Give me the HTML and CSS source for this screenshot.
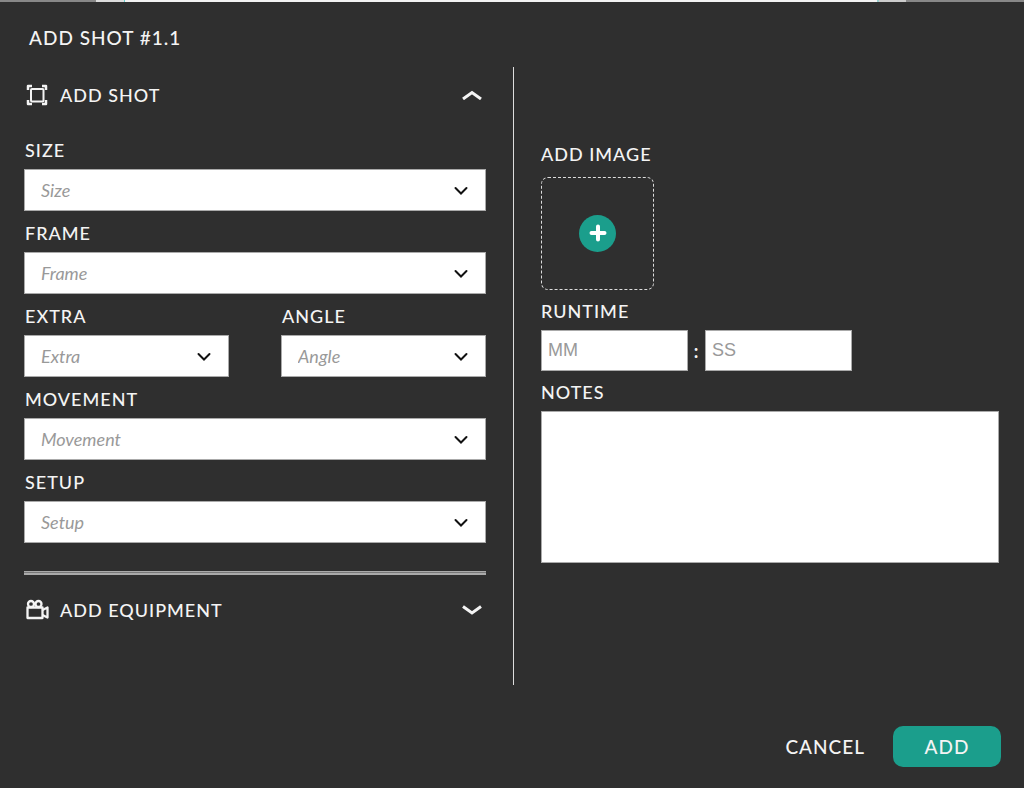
FILE: index.html
```html
<!DOCTYPE html>
<html lang="en">
<head>
<meta charset="utf-8">
<meta name="viewport" content="width=device-width, initial-scale=1">
<title>Add shot</title>
<link rel="stylesheet" href="styles.css">
</head>
<body>
<div class="backdrop"></div>
<main class="modal">
  <h1 class="title">ADD SHOT #1.1</h1>
  <form class="form">
    <div class="columns">
      <section class="left">
        <button type="button" class="section-toggle" aria-expanded="true">
          <svg class="section-icon" viewBox="0 0 24 24" fill="none" stroke="currentColor" stroke-width="2" aria-hidden="true"><path d="M3 7V3H7M17 3H21V7M21 17V21H17M7 21H3V17" stroke-width="2.500" stroke-linejoin="round"/><rect x="6" y="6" width="12.500" height="12.500" rx="1"/></svg>
          <span>ADD SHOT</span>
          <svg class="caret" viewBox="0 0 20 10" aria-hidden="true"><path d="M1 9L10 2.500L19 9"/></svg>
        </button>
        <div class="fields">
          <div class="field">
            <label for="size">SIZE</label>
            <div class="picker"><select id="size"><option>Size</option></select><svg viewBox="0 0 14 10" aria-hidden="true"><path d="M1.500 3L7 8.500L12.500 3"/></svg></div>
          </div>
          <div class="field">
            <label for="frame">FRAME</label>
            <div class="picker"><select id="frame"><option>Frame</option></select><svg viewBox="0 0 14 10" aria-hidden="true"><path d="M1.500 3L7 8.500L12.500 3"/></svg></div>
          </div>
          <div class="pair">
            <div class="field">
              <label for="extra">EXTRA</label>
              <div class="picker"><select id="extra"><option>Extra</option></select><svg viewBox="0 0 14 10" aria-hidden="true"><path d="M1.500 3L7 8.500L12.500 3"/></svg></div>
            </div>
            <div class="field">
              <label for="angle">ANGLE</label>
              <div class="picker"><select id="angle"><option>Angle</option></select><svg viewBox="0 0 14 10" aria-hidden="true"><path d="M1.500 3L7 8.500L12.500 3"/></svg></div>
            </div>
          </div>
          <div class="field">
            <label for="movement">MOVEMENT</label>
            <div class="picker"><select id="movement"><option>Movement</option></select><svg viewBox="0 0 14 10" aria-hidden="true"><path d="M1.500 3L7 8.500L12.500 3"/></svg></div>
          </div>
          <div class="field">
            <label for="setup">SETUP</label>
            <div class="picker"><select id="setup"><option>Setup</option></select><svg viewBox="0 0 14 10" aria-hidden="true"><path d="M1.500 3L7 8.500L12.500 3"/></svg></div>
          </div>
        </div>
        <hr class="rule">
        <button type="button" class="section-toggle" aria-expanded="false">
          <svg class="section-icon" viewBox="0 0 24 24" fill="none" stroke="currentColor" stroke-width="2.300" stroke-linejoin="round" aria-hidden="true"><rect x="2.500" y="9.500" width="15" height="10.500"/><circle cx="6" cy="6" r="3"/><circle cx="13.500" cy="6" r="3"/><path d="M17.500 12L22.500 9.500V19.500L17.500 17"/></svg>
          <span>ADD EQUIPMENT</span>
          <svg class="caret" viewBox="0 0 20 10" aria-hidden="true"><path d="M1 1.500L10 8L19 1.500"/></svg>
        </button>
      </section>
      <div class="divider"></div>
      <section class="right">
        <div class="field">
          <span class="label" id="image-label">ADD IMAGE</span>
          <button type="button" class="upload" aria-labelledby="image-label">
            <svg viewBox="0 0 37 37" aria-hidden="true"><circle cx="18.500" cy="18.500" r="18.500" fill="#1b9e8c"/><path d="M19 11.500V24.500M12.500 18H25.500" stroke="#fff" stroke-width="4" stroke-linecap="round"/></svg>
          </button>
        </div>
        <div class="field">
          <label for="minutes">RUNTIME</label>
          <div class="runtime">
            <input id="minutes" type="text" placeholder="MM">
            <span class="colon">:</span>
            <input id="seconds" type="text" placeholder="SS" aria-label="Runtime seconds">
          </div>
        </div>
        <div class="field">
          <label for="notes">NOTES</label>
          <textarea id="notes"></textarea>
        </div>
      </section>
    </div>
    <div class="actions">
      <button type="button" class="cancel">CANCEL</button>
      <button type="submit" class="add">ADD</button>
    </div>
  </form>
</main>
</body>
</html>
```
FILE: styles.css
```css
* { box-sizing: border-box; }

body {
  margin: 0;
  min-height: 100vh;
  background: #2f2f2f;
  color: #f4f4f4;
  font: 500 18px/22px Lato, sans-serif;
  letter-spacing: 1px;
}

button {
  margin: 0;
  padding: 0;
  border: 0;
  background: none;
  color: inherit;
  font: inherit;
  letter-spacing: inherit;
  cursor: pointer;
}

svg { display: block; }

.backdrop {
  height: 2px;
  background: linear-gradient(90deg, #888 0 96px, #ddd 96px 124px, #6cc 124px 125px, #f2f2f2 125px calc(100% - 147px), #9cc calc(100% - 147px) calc(100% - 145px), #ccc calc(100% - 145px) calc(100% - 118px), #888 calc(100% - 118px));
}

.modal { padding: 24px 25px 20px 24px; }

.title {
  margin: 0 0 17px 5px;
  font-size: 19px;
  font-weight: 500;
  line-height: 24px;
}

.columns {
  display: grid;
  grid-template-columns: 462fr 1px 458fr;
  column-gap: 27px;
  min-height: 618px;
}

.divider { background: #ddd; }

.left { padding-top: 15px; }

.left label { padding-left: 1px; }

.section-toggle {
  display: flex;
  align-items: center;
  gap: 11px;
  width: 100%;
  padding: 0 4px 0 1px;
  text-align: left;
}

.section-toggle span { flex: 1; line-height: 26px; }

.section-icon { width: 24px; height: 24px; }

.caret {
  width: 20px;
  height: 10px;
  fill: none;
  stroke: #f4f4f4;
  stroke-width: 3;
}

.fields {
  display: grid;
  gap: 11px;
  margin-top: 31px;
}

.field { display: grid; gap: 8px; }

.pair {
  display: grid;
  grid-template-columns: 1fr 1fr;
  gap: 52px;
}

.picker { display: grid; align-items: center; }

.picker select,
.picker svg { grid-area: 1 / 1; }

.picker svg {
  justify-self: end;
  width: 14px;
  height: 10px;
  margin-right: 18px;
  fill: none;
  stroke: #111;
  stroke-width: 2;
  stroke-linecap: round;
  pointer-events: none;
}

select,
input,
textarea {
  width: 100%;
  min-width: 0;
  margin: 0;
  border: 1px solid #aaa;
  border-radius: 0;
  background: #fff;
}

select {
  height: 42px;
  padding: 0 40px 0 16px;
  appearance: none;
  color: #999;
  font: italic 18px/22px Lato, sans-serif;
}

.rule {
  height: 4px;
  margin: 28px 0 22px;
  border: 1px solid #aaa;
  border-width: 1px 0 2px;
  background: #777;
}

.right {
  display: grid;
  align-content: start;
  gap: 10px;
  padding-top: 76px;
}

.upload {
  display: grid;
  place-items: center;
  width: 113px;
  height: 113px;
  margin-top: 4px;
  border: 1px dashed #ddd;
  border-radius: 7px;
}

.upload svg { width: 37px; height: 37px; fill: none; }

.runtime {
  display: grid;
  grid-template-columns: 147px 17px 147px;
  align-items: center;
}

.colon { text-align: center; font-weight: 700; }

input {
  height: 41px;
  padding: 0 6px;
  font: 18px/22px "Liberation Sans", Arial, sans-serif;
}

input::placeholder { color: #999; opacity: 1; }

textarea {
  height: 152px;
  padding: 8px;
  resize: none;
  font: 18px/22px Lato, sans-serif;
}

.actions {
  display: flex;
  justify-content: flex-end;
  align-items: center;
  gap: 28px;
  margin: 41px -2px 0 0;
  font-size: 19px;
}

.add {
  width: 108px;
  height: 41px;
  border-radius: 10px;
  background: #1b9e8c;
}
```
